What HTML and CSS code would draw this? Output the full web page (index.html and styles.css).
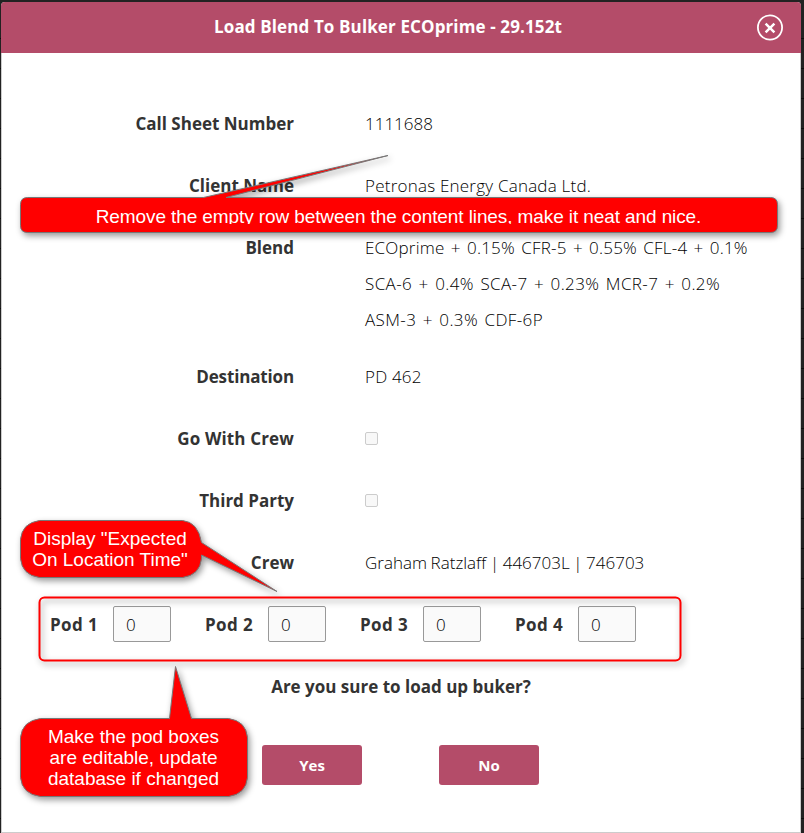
FILE: index.html
```
<!DOCTYPE html>
<html lang="en">
<head>
<meta charset="utf-8">
<title>Load Blend To Bulker</title>
<link rel="stylesheet" href="styles.css">
</head>
<body>
<main class="modal">
  <header class="modal-header">
    <h1 class="title">Load Blend To Bulker ECOprime - 29.152t</h1>
    <button class="close" aria-label="Close"><svg width="28" height="28" viewBox="0 0 28 28"><circle cx="14" cy="13.500" r="12.1" fill="none" stroke="#fff" stroke-width="1.8"/><path d="M9.600 9.700 18.400 18.300M18.400 9.700 9.600 18.300" stroke="#fff" stroke-width="2.5"/></svg></button>
  </header>
  <section class="fields">
    <div class="row"><span class="label">Call Sheet Number</span><span class="value">1111688</span></div>
    <div class="row"><span class="label">Client Name</span><span class="value v-client">Petronas Energy Canada Ltd.</span></div>
    <div class="row blend"><span class="label">Blend</span><span class="value v-blend">ECOprime + 0.15% CFR-5 + 0.55% CFL-4 + 0.1%<br><span class="wide">SCA-6 + 0.4% SCA-7 + 0.23% MCR-7 + 0.2%<br>ASM-3 + 0.3% CDF-6P</span></span></div>
    <div class="row"><span class="label l-dest">Destination</span><span class="value v-dest">PD 462</span></div>
    <div class="row"><span class="label l-go">Go With Crew</span><span class="value"><i class="check"></i></span></div>
    <div class="row"><span class="label">Third Party</span><span class="value"><i class="check"></i></span></div>
    <div class="row"><span class="label">Crew</span><span class="value v-crew">Graham Ratzlaff | 446703L | 746703</span></div>
  </section>
  <section class="pods">
    <div class="pod"><span class="pod-label">Pod 1</span><span class="pod-box">0</span></div>
    <div class="pod"><span class="pod-label">Pod 2</span><span class="pod-box">0</span></div>
    <div class="pod"><span class="pod-label">Pod 3</span><span class="pod-box">0</span></div>
    <div class="pod"><span class="pod-label">Pod 4</span><span class="pod-box">0</span></div>
  </section>
  <p class="confirm">Are you sure to load up buker?</p>
  <div class="actions"><button class="btn">Yes</button><button class="btn">No</button></div>
</main>
<svg class="notes" width="804" height="833" viewBox="0 0 804 833">
  <rect class="frame" x="39.5" y="597.5" width="641" height="63" rx="5"/>
  <path class="bubble" d="M27.500 197.500H203.500L388 155.500L226 197.500H770.500Q777.500 197.500 777.500 204.500V225.500Q777.500 232.500 770.500 232.500H27.500Q20.500 232.500 20.500 225.500V204.500Q20.500 197.500 27.500 197.500Z"/>
  <path class="bubble" d="M39.500 520.500H182.500Q198 522 201.500 542.500L277 591.500L201.500 555V558.500Q200 575 182.500 577.500H39.500Q22 575 20.500 558.500V539.500Q22 523 39.500 520.500Z"/>
  <path class="bubble" d="M40.500 718.500H169.500L175.500 666.500L191.500 718.500H228.500Q246 721 247.500 737.500V777.500Q246 794 228.500 796.500H40.500Q22 794 20.500 777.500V737.500Q22 721 40.500 718.500Z"/>
</svg>
<div class="note note-rows">Remove the empty row between the content lines, make it neat and nice.</div>
<div class="note note-time">Display "Expected<br>On Location Time"</div>
<div class="note note-pods">Make the pod boxes<br>are editable, update<br>database if changed</div>
</body>
</html>
```
FILE: styles.css
```
* { box-sizing: border-box; }
body {
  margin: 0;
  width: 804px;
  height: 833px;
  overflow: hidden;
  position: relative;
  padding: 2px 3px 0 1px;
  background: repeating-linear-gradient(#222 0 29px, #0c0c0c 29px 30px) 0 9px;
  font-family: "Open Sans", sans-serif;
  font-size: 17px;
  color: #333;
}
.modal {
  height: 831px;
  background: #fff;
  border: 1px solid #ccc;
  border-top: 0;
  border-radius: 4px 4px 0 0;
}
.modal-header {
  height: 51px;
  margin: 0 -1px;
  padding: 0 17px 0 19px;
  display: flex;
  align-items: center;
  background: #b44c69;
  border-radius: 4px 4px 0 0;
  color: #fff;
}
.title { flex: 1; margin: 0; text-align: center; font-size: 17px; line-height: 24px; padding-bottom: 1px; font-weight: 700; letter-spacing: .12px; }
.close { width: 28px; height: 28px; padding: 0; border: 0; background: none; }
.close svg { display: block; }
.fields { padding: 53px 0 0; }
.row { display: grid; grid-template-columns: 292px 1fr; column-gap: 71px; line-height: 36px; margin-bottom: 26px; white-space: nowrap; }
.blend { margin-bottom: 21px; }
.label { text-align: right; font-weight: 700; }
.l-dest { letter-spacing: -.15px; }
.l-go { letter-spacing: .15px; }
.value { display: block; font-weight: 300; color: #000; }
.v-client { letter-spacing: .22px; }
.v-blend { letter-spacing: .2px; word-spacing: 1.7px; }
.wide { letter-spacing: .38px; }
.v-dest { letter-spacing: .2px; }
.v-crew { letter-spacing: 0; word-spacing: -.8px; }
.check { display: block; width: 13px; height: 13px; margin-top: 11px; border: 1px solid #ccc; border-radius: 2px; background: #f8f8f8; }
.pods { display: flex; padding-left: 48px; margin-top: -1px; height: 36px; }
.pod { width: 155px; display: flex; align-items: center; }
.pod-label { width: 63px; font-weight: 700; letter-spacing: .4px; }
.pod-box { width: 58px; height: 36px; padding-left: 12px; line-height: 35px; border: 1px solid #999; border-radius: 2px; background: #fafafa; font-weight: 300; color: #000; }
.confirm { margin: 27px 0 0; width: 798px; line-height: 36px; font-weight: 700; text-align: center; }
.actions { display: flex; gap: 77px; padding: 40px 0 0 260px; }
.btn { width: 100px; height: 40px; padding: 0; border: 0; border-radius: 3px; background: #b44c69; color: #fff; font: 700 15px "Open Sans", sans-serif; }
.notes { position: absolute; left: 0; top: 0; filter: drop-shadow(2px 3px 3px rgba(0, 0, 0, .4)); }
.frame { fill: none; stroke: #f00; stroke-width: 2; }
.bubble { fill: #f00; stroke: #777; stroke-width: 1; }
.note { position: absolute; overflow: hidden; color: #fff; font-family: "Liberation Sans", sans-serif; font-size: 19px; line-height: 21px; text-align: center; white-space: nowrap; }
.note-rows { left: 20px; top: 206px; width: 757px; height: 18px; letter-spacing: -.1px; }
.note-time { left: 20px; top: 528px; width: 180px; height: 44px; }
.note-pods { left: 20px; top: 726px; width: 227px; height: 62px; }
```
